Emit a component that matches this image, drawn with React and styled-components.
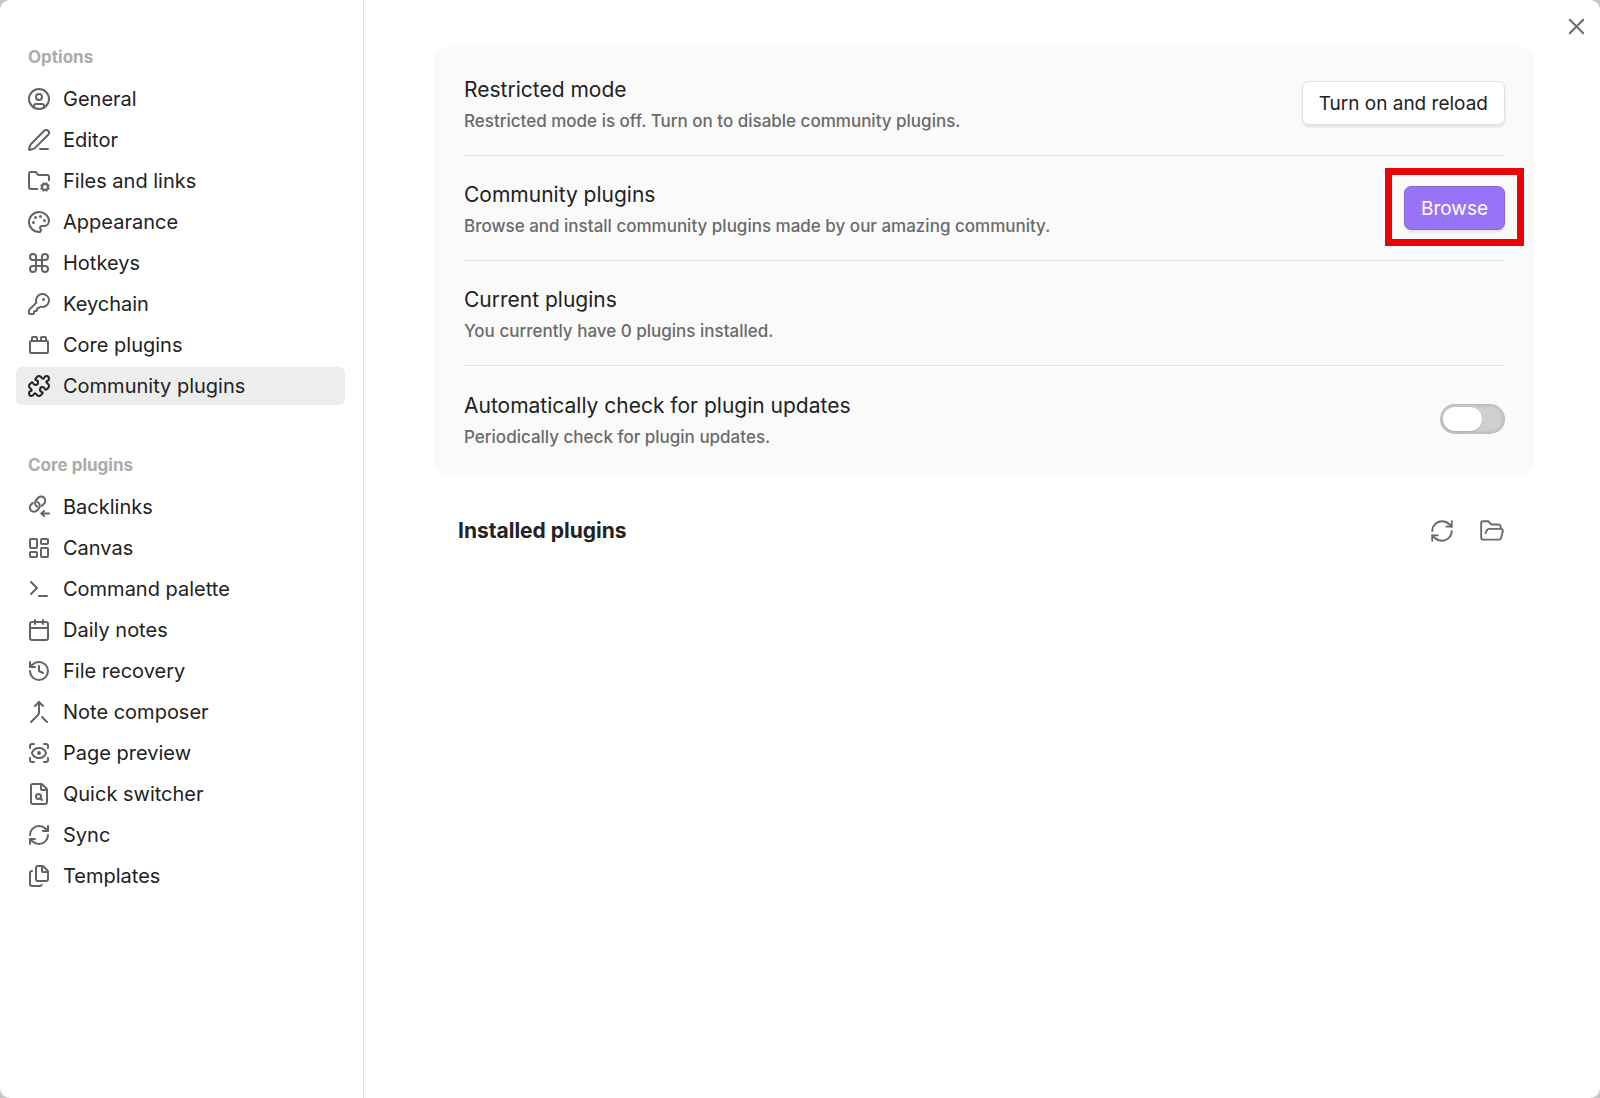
import React, { useState } from 'react'
import styled, { createGlobalStyle } from 'styled-components'
import {
  Calendar, CircleUser, Command, Files, FolderCog, FolderOpen, History, KeyRound,
  LayoutDashboard, Merge, Palette, PenLine, Puzzle, RefreshCw, ScanEye, Terminal, ToyBrick, X,
} from 'lucide-react'

const GlobalStyle=createGlobalStyle`
  *{
    box-sizing: border-box;
  }
  body{
    margin: 0;
    background-color: #c8c8c8;
    color: #222222;
    font-family: Inter, 'Liberation Sans', sans-serif;
  }
  button{
    font-family: inherit;
    cursor: pointer;
  }
`
const Container=styled.div`
  display: flex;
  min-height: 100vh;
  position: relative;
  background-color: white;
  border-radius: 10px;
`
const Sidebar=styled.nav`
  flex: 0 0 364px;
  display: flex;
  flex-direction: column;
  gap: 48px;
  padding: 45px 18px 45px 16px;
  border-right: 1px solid #e0e0e0;
`
const Group=styled.div`
  display: flex;
  flex-direction: column;
  gap: 3px;
`
const GroupTitle=styled.div`
  padding: 0 12px;
  margin-bottom: 8px;
  font-size: 17px;
  font-weight: 700;
  line-height: 24px;
  color: #ababab;
`
const NavItem=styled.button`
  display: flex;
  align-items: center;
  gap: 12px;
  height: 38px;
  padding: 0 11px;
  border: none;
  border-radius: 6px;
  background-color: ${(p)=>(p.$active?'#ededed':'transparent')};
  color: #222222;
  font-size: 20px;
  text-align: left;
  svg{
    color: ${(p)=>(p.$active?'#222222':'#636363')};
  }
`
const Main=styled.main`
  flex: 1;
  padding: 45px 66px 45px 70px;
`
const Card=styled.section`
  padding: 6px 29px 5px 30px;
  border-radius: 18px;
  background-color: #fafafa;
`
const Row=styled.div`
  display: flex;
  align-items: center;
  justify-content: space-between;
  min-height: 105px;
  &:not(:last-child){
    border-bottom: 1px solid #e0e0e0;
  }
`
const Info=styled.div`
  display: flex;
  flex-direction: column;
  gap: 5px;
  padding-top: 3px;
`
const Name=styled.label`
  font-size: 21px;
  line-height: 28px;
`
const Desc=styled.div`
  font-size: 17px;
  font-weight: 500;
  line-height: 24px;
  color: #6a6a6a;
`
const Button=styled.button`
  height: 44px;
  padding: 0 16px;
  border: 1px solid ${(p)=>(p.$cta?'#8a68dc':'#e0e0e0')};
  border-radius: 7px;
  background-color: ${(p)=>(p.$cta?'#9873f7':'white')};
  color: ${(p)=>(p.$cta?'white':'#222222')};
  font-size: 19px;
  box-shadow: 0 2px 3px rgba(0,0,0,0.1);
`
const Highlight=styled.div`
  padding: 11px 12px 9px;
  margin: 0 -19px 2px 0;
  border: 7px solid #e90505;
`
const Toggle=styled.input`
  appearance: none;
  width: 65px;
  height: 30px;
  margin: 0;
  padding: 3px;
  border-radius: 15px;
  background-color: ${(p)=>(p.checked?'#9873f7':'#d0d0d0')};
  box-shadow: inset 0 0 4px 1px rgba(0,0,0,0.14);
  cursor: pointer;
  &::before{
    content: '';
    display: block;
    width: 39px;
    height: 24px;
    margin-left: ${(p)=>(p.checked?'20px':'0')};
    border-radius: 12px;
    background-color: white;
    box-shadow: 0 1px 2px rgba(0,0,0,0.15);
  }
`
const InstalledBar=styled.div`
  display: flex;
  align-items: center;
  justify-content: space-between;
  padding: 38px 29px 0 24px;
`
const Heading=styled.h2`
  margin: 0;
  font-size: 21px;
  font-weight: 700;
  line-height: 34px;
`
const Actions=styled.div`
  display: flex;
  gap: 24px;
`
const IconButton=styled.button`
  display: flex;
  padding: 0;
  border: none;
  background: none;
  color: #6a6a6a;
`
const Close=styled(IconButton)`
  position: absolute;
  top: 13px;
  right: 10px;
`

const Svg=({children})=>(
  <svg width="24" height="24" viewBox="0 0 24 24" fill="none" stroke="currentColor"
    strokeWidth="2" strokeLinecap="round" strokeLinejoin="round" aria-hidden="true">
    {children}
  </svg>
)
// chain link with an arrow coming in
const BacklinkIcon=()=>(
  <Svg>
    <path d="M10.300 11.700a4.200 4.200 0 0 1-1.200-6.700l2.200-2.200a4.100 4.100 0 0 1 5.800 5.800l-2.200 2.200" />
    <path d="M10.300 6.900a4.200 4.200 0 0 1 1.400 6.700l-1.900 1.900a4.100 4.100 0 0 1-5.800-5.800l1.700-1.700" />
    <path d="M22 18.500h-7.500" />
    <path d="m17 16-2.500 2.500 2.500 2.500" />
  </Svg>
)
const FileSearchIcon=()=>(
  <Svg>
    <path d="M6 22a2 2 0 0 1-2-2V4a2 2 0 0 1 2-2h8a2.4 2.4 0 0 1 1.704.706l3.588 3.588A2.4 2.4 0 0 1 20 8v12a2 2 0 0 1-2 2z" />
    <path d="M14 2v5a1 1 0 0 0 1 1h5" />
    <circle cx="11.5" cy="14.5" r="2.5" />
    <path d="M13.3 16.3 15 18" />
  </Svg>
)

const options=[
  {name:"General",icon:CircleUser},
  {name:"Editor",icon:PenLine},
  {name:"Files and links",icon:FolderCog},
  {name:"Appearance",icon:Palette},
  {name:"Hotkeys",icon:Command},
  {name:"Keychain",icon:KeyRound},
  {name:"Core plugins",icon:ToyBrick},
  {name:"Community plugins",icon:Puzzle},
]
const corePlugins=[
  {name:"Backlinks",icon:BacklinkIcon},
  {name:"Canvas",icon:LayoutDashboard},
  {name:"Command palette",icon:Terminal},
  {name:"Daily notes",icon:Calendar},
  {name:"File recovery",icon:History},
  {name:"Note composer",icon:Merge},
  {name:"Page preview",icon:ScanEye},
  {name:"Quick switcher",icon:FileSearchIcon},
  {name:"Sync",icon:RefreshCw},
  {name:"Templates",icon:Files},
]

const NavGroup=({title,items,active,setActive})=>(
  <Group>
    <GroupTitle>{title}</GroupTitle>
    {items.map(({name,icon:Icon})=>{
      const id=title+"/"+name;
      return (
        <NavItem key={id} type="button" $active={active===id} onClick={()=>setActive(id)}>
          <Icon size={24} strokeWidth={2} />
          {name}
        </NavItem>
      )
    })}
  </Group>
)

const App = () => {
  const [active,setActive]=useState("Options/Community plugins");
  const [autoCheck,setAutoCheck]=useState(false);

  return (
    <>
      <GlobalStyle/>
      <Container>
        <Sidebar>
          <NavGroup title="Options" items={options} active={active} setActive={setActive} />
          <NavGroup title="Core plugins" items={corePlugins} active={active} setActive={setActive} />
        </Sidebar>
        <Main>
          <Card>
            <Row>
              <Info>
                <Name as="div">Restricted mode</Name>
                <Desc>Restricted mode is off. Turn on to disable community plugins.</Desc>
              </Info>
              <Button type="button">Turn on and reload</Button>
            </Row>
            <Row>
              <Info>
                <Name as="div">Community plugins</Name>
                <Desc>Browse and install community plugins made by our amazing community.</Desc>
              </Info>
              <Highlight>
                <Button type="button" $cta>Browse</Button>
              </Highlight>
            </Row>
            <Row>
              <Info>
                <Name as="div">Current plugins</Name>
                <Desc>You currently have 0 plugins installed.</Desc>
              </Info>
            </Row>
            <Row>
              <Info>
                <Name htmlFor="auto-check">Automatically check for plugin updates</Name>
                <Desc>Periodically check for plugin updates.</Desc>
              </Info>
              <Toggle id="auto-check" type="checkbox" checked={autoCheck} onChange={()=>setAutoCheck(!autoCheck)} />
            </Row>
          </Card>
          <InstalledBar>
            <Heading>Installed plugins</Heading>
            <Actions>
              <IconButton type="button" aria-label="Reload plugins"><RefreshCw size={26} strokeWidth={1.75} /></IconButton>
              <IconButton type="button" aria-label="Open plugins folder"><FolderOpen size={26} strokeWidth={1.75} /></IconButton>
            </Actions>
          </InstalledBar>
        </Main>
        <Close type="button" aria-label="Close"><X size={27} strokeWidth={1.75} /></Close>
      </Container>
    </>
  )
}

export default App
